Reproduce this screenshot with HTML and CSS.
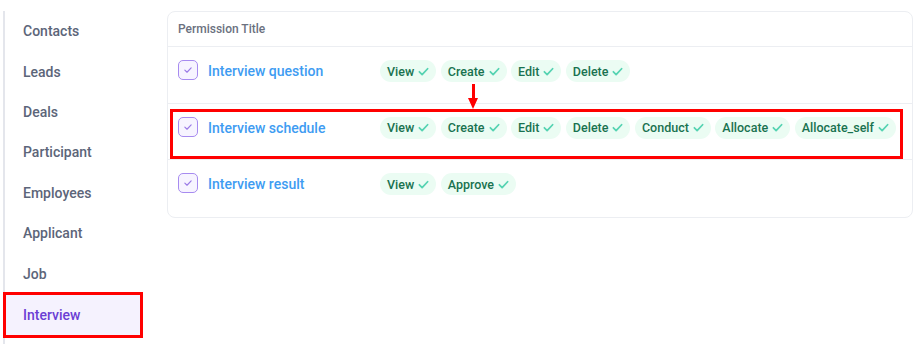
FILE: index.html
```html
<!DOCTYPE html>
<html>
<head>
<meta charset="utf-8">
<link rel="stylesheet" href="styles.css">
</head>
<body>
<div class="page">
  <nav class="sidebar">
    <div class="nav-item">Contacts</div>
    <div class="nav-item">Leads</div>
    <div class="nav-item">Deals</div>
    <div class="nav-item">Participant</div>
    <div class="nav-item">Employees</div>
    <div class="nav-item">Applicant</div>
    <div class="nav-item">Job</div>
    <div class="nav-item active">Interview</div>
  </nav>
  <main class="main">
    <div class="card">
      <div class="card-head">Permission Title</div>
      <div class="row">
        <div class="title"><span class="cb"><svg viewBox="0 0 20 20" width="20" height="20"><path d="M6.5 10.2l2.4 2.3 4.6-4.8" fill="none" stroke="#9b7be6" stroke-width="1.3" stroke-linecap="round" stroke-linejoin="round"/></svg></span><span class="name">Interview question</span></div>
        <div class="chips">
          <span class="chip">View<svg class="ck" viewBox="0 0 12 12"><path d="M1.5 6.3l3 3 6-6.3"/></svg></span>
          <span class="chip">Create<svg class="ck" viewBox="0 0 12 12"><path d="M1.5 6.3l3 3 6-6.3"/></svg></span>
          <span class="chip">Edit<svg class="ck" viewBox="0 0 12 12"><path d="M1.5 6.3l3 3 6-6.3"/></svg></span>
          <span class="chip">Delete<svg class="ck" viewBox="0 0 12 12"><path d="M1.5 6.3l3 3 6-6.3"/></svg></span>
        </div>
      </div>
      <div class="row marked">
        <div class="arrow"><span class="shaft"></span><span class="head"></span></div>
        <div class="title"><span class="cb"><svg viewBox="0 0 20 20" width="20" height="20"><path d="M6.5 10.2l2.4 2.3 4.6-4.8" fill="none" stroke="#9b7be6" stroke-width="1.3" stroke-linecap="round" stroke-linejoin="round"/></svg></span><span class="name">Interview schedule</span></div>
        <div class="chips">
          <span class="chip">View<svg class="ck" viewBox="0 0 12 12"><path d="M1.5 6.3l3 3 6-6.3"/></svg></span>
          <span class="chip">Create<svg class="ck" viewBox="0 0 12 12"><path d="M1.5 6.3l3 3 6-6.3"/></svg></span>
          <span class="chip">Edit<svg class="ck" viewBox="0 0 12 12"><path d="M1.5 6.3l3 3 6-6.3"/></svg></span>
          <span class="chip">Delete<svg class="ck" viewBox="0 0 12 12"><path d="M1.5 6.3l3 3 6-6.3"/></svg></span>
          <span class="chip">Conduct<svg class="ck" viewBox="0 0 12 12"><path d="M1.5 6.3l3 3 6-6.3"/></svg></span>
          <span class="chip">Allocate<svg class="ck" viewBox="0 0 12 12"><path d="M1.5 6.3l3 3 6-6.3"/></svg></span>
          <span class="chip">Allocate_self<svg class="ck" viewBox="0 0 12 12"><path d="M1.5 6.3l3 3 6-6.3"/></svg></span>
        </div>
      </div>
      <div class="row last">
        <div class="title"><span class="cb"><svg viewBox="0 0 20 20" width="20" height="20"><path d="M6.5 10.2l2.4 2.3 4.6-4.8" fill="none" stroke="#9b7be6" stroke-width="1.3" stroke-linecap="round" stroke-linejoin="round"/></svg></span><span class="name">Interview result</span></div>
        <div class="chips">
          <span class="chip">View<svg class="ck" viewBox="0 0 12 12"><path d="M1.5 6.3l3 3 6-6.3"/></svg></span>
          <span class="chip">Approve<svg class="ck" viewBox="0 0 12 12"><path d="M1.5 6.3l3 3 6-6.3"/></svg></span>
        </div>
      </div>
    </div>
  </main>
</div>
</body>
</html>
```
FILE: styles.css
```css
* { box-sizing: border-box; }
html, body { margin: 0; padding: 0; background: #fff; }
body { font-family: Roboto, "Noto Sans", sans-serif; width: 920px; height: 344px; overflow: hidden; }
.page { display: flex; padding: 11px 0 0 3px; }
.sidebar {
  width: 140px;
  border-left: 2px solid #e4e6ec;
  height: 340px;
  flex: none;
}
.nav-item {
  height: 40.4px;
  display: flex;
  align-items: center;
  padding-left: 18px;
  font-size: 14px;
  font-weight: 500;
  color: #5c6579;
}
.nav-item.active {
  background: #f5f2fe;
  color: #6b3fd4;
  outline: 3px solid #ff0000;
  outline-offset: 0;
  margin-top: 1px;
  margin-left: 1px;
  margin-right: 3px;
  height: 40px;
  padding-left: 17px;
}
.main { padding-left: 24px; flex: none; }
.card {
  width: 746px;
  border: 1px solid #eceef2;
  border-radius: 8px;
  background: #fff;
}
.card-head {
  height: 35px;
  padding: 10px 10px 0;
  font-size: 12px;
  font-weight: 500;
  color: #6b7180;
  border-bottom: 1px solid #eceef2;
}
.row {
  position: relative;
  display: flex;
  align-items: flex-start;
  height: 56.5px;
  padding: 13px 10px 0;
  border-bottom: 1px solid #eceef2;
}
.row.last { border-bottom: none; height: 57px; }
.title { display: flex; align-items: center; width: 202px; height: 22px; flex: none; }
.cb {
  width: 20px; height: 20px;
  border: 1.5px solid #a78bf0;
  border-radius: 5px;
  background: #f7f4ff;
  display: flex; align-items: center; justify-content: center;
  margin-top: -2px;
}
.cb svg { width: 18px; height: 18px; }
.name {
  margin-left: 10px;
  font-size: 14px;
  font-weight: 500;
  color: #3e9cf2;
}
.chips { display: flex; gap: 4.5px; }
.chip {
  display: inline-flex;
  align-items: center;
  height: 22px;
  padding: 0 7px;
  border-radius: 11px;
  background: #ebfcf3;
  color: #197250;
  font-size: 12.5px;
  font-weight: 500;
}
.ck {
  width: 11px; height: 11px;
  margin-left: 4px;
  fill: none;
  stroke: #56d3b2;
  stroke-width: 1.9;
  stroke-linecap: round;
  stroke-linejoin: round;
}
.row.marked::after {
  content: "";
  position: absolute;
  left: 2px; right: 9px; top: 5px; bottom: 0;
  border: 3px solid #ff0000;
  pointer-events: none;
}
.arrow {
  position: absolute;
  left: 300px;
  top: -20px;
  width: 10px;
  height: 26px;
}
.arrow .shaft {
  position: absolute;
  left: 3.5px; top: 0;
  width: 3px; height: 16px;
  background: #ff0000;
}
.arrow .head {
  position: absolute;
  left: 0; top: 14px;
  width: 0; height: 0;
  border-left: 5px solid transparent;
  border-right: 5px solid transparent;
  border-top: 11px solid #ff0000;
}
```
